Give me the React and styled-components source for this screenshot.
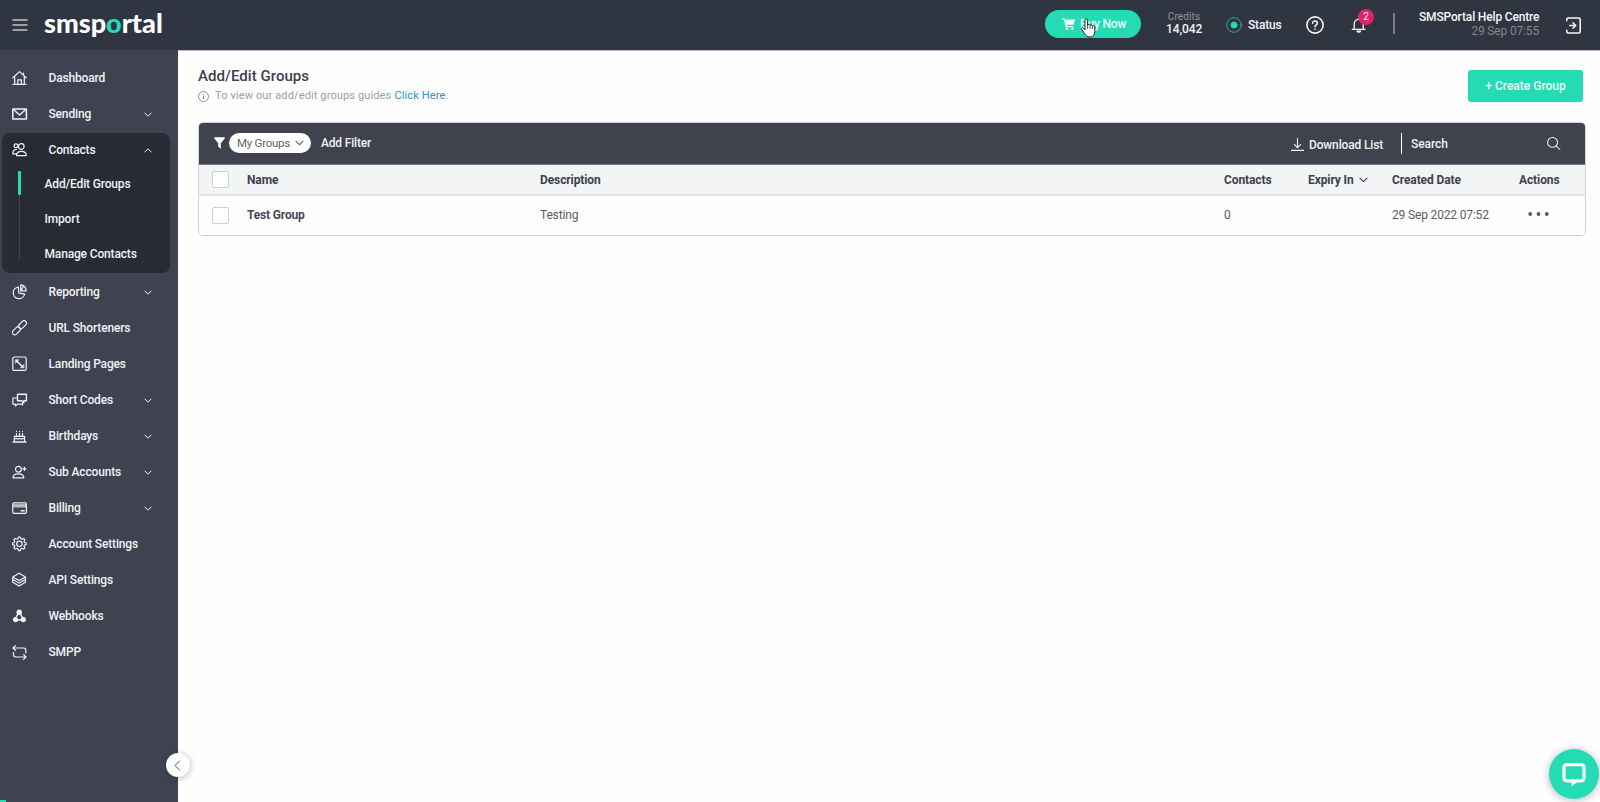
import React from "react"
import styled, { createGlobalStyle } from "styled-components"

const colors = {
  header: "#2f3541",
  side: "#3f4250",
  active: "#272b34",
  toolbar: "#40424e",
  teal: "#25dbb3",
  pink: "#dd2468",
  border: "#c9d3dc",
  text: "#3d414d",
}

const GlobalStyle = createGlobalStyle`
  * {
    box-sizing: border-box;
  }
  body {
    margin: 0;
    background: #fefefe;
    font-family: Roboto, "Liberation Sans", sans-serif;
    font-size: 12px;
    letter-spacing: -0.16px;
    color: ${colors.text};
    overflow: hidden;
  }
  svg {
    display: block;
    flex: none;
  }
`

const Page = styled.div`
  display: flex;
  flex-direction: column;
  height: 802px;
`

const Header = styled.header`
  display: flex;
  align-items: center;
  flex: none;
  height: 50px;
  padding: 0 18px 0 12px;
  background: ${colors.header};
  color: #f4f5f7;
`
const Logo = styled.div`
  margin: -5px auto 0 16px;
  font-family: Lato, sans-serif;
  font-size: 27px;
  font-weight: 900;
  line-height: 36px;
  letter-spacing: 0;
  color: #fff;

  span {
    color: ${colors.teal};
  }
`
const BuyNow = styled.div`
  position: relative;
  display: flex;
  align-items: center;
  gap: 5px;
  width: 96px;
  height: 28px;
  margin: -3px 25px 0 0;
  padding-left: 17px;
  border-radius: 14px;
  background: ${colors.teal};
  font-weight: 500;
  color: #effffb;
`
const Pointer = styled.svg`
  position: absolute;
  left: 35px;
  top: 8px;
`
const Credits = styled.div`
  width: 36px;
  margin: -4px 24px 0 0;
  text-align: center;
  line-height: 13px;
  font-weight: 500;
  letter-spacing: -0.1px;
  white-space: nowrap;

  small {
    display: block;
    font-size: 10px;
    font-weight: 400;
    letter-spacing: 0.1px;
    color: #94959d;
  }
`
const Status = styled.div`
  display: flex;
  align-items: center;
  gap: 6px;
  width: 80px;
  margin-top: -1px;
  font-weight: 500;
`
const Bell = styled.div`
  position: relative;
  margin-left: 27px;
`
const Badge = styled.span`
  position: absolute;
  left: 7px;
  top: -8px;
  width: 16px;
  height: 16px;
  border-radius: 50%;
  background: ${colors.pink};
  font-size: 10px;
  line-height: 16px;
  text-align: center;
`
const Separator = styled.div`
  width: ${(p) => p.$width || 1}px;
  height: 21px;
  margin: ${(p) => p.$margin};
  background: ${(p) => p.$color || "#fff"};
`
const Account = styled.div`
  width: 120px;
  margin: -2px 26px 0 0;
  text-align: right;
  line-height: 14px;
  font-weight: 500;
  white-space: nowrap;

  small {
    display: block;
    font-size: 12px;
    font-weight: 400;
    color: #85868f;
  }
`

const Body = styled.div`
  display: flex;
  flex: 1;
  min-height: 0;
`
const Sidebar = styled.nav`
  position: relative;
  flex: none;
  width: 178px;
  padding-top: 10px;
  background: ${colors.side};
  color: #f1f2f5;
  font-weight: 500;
`
const NavItem = styled.div`
  display: flex;
  align-items: center;
  height: ${(p) => (p.$open ? 34 : 36)}px;
  padding: ${(p) => (p.$open ? "0 18px 0 10px" : "0 26px 0 12px")};

  span {
    flex: 1;
    margin-left: 20.5px;
  }
`
const NavGroup = styled.div`
  width: 168px;
  height: 140px;
  margin: 1px 0 1px 2px;
  border-radius: 8px;
  background: ${colors.active};
`
const SubList = styled.div`
  margin-left: 16px;
  display: flex;
`
const Track = styled.div`
  width: 3px;
  height: 89px;
  margin-top: 4px;
  background: linear-gradient(
    90deg,
    transparent 1px,
    #41434f 1px,
    #41434f 2px,
    transparent 2px
  );

  &::before {
    content: "";
    display: block;
    height: 24px;
    border-radius: 1px;
    background: ${colors.teal};
  }
`
const SubItem = styled.div`
  height: 35px;
  padding-left: 23.5px;
  line-height: 34px;
`
const Collapse = styled.div`
  position: absolute;
  right: -12px;
  bottom: 25px;
  display: flex;
  align-items: center;
  justify-content: center;
  width: 24px;
  height: 24px;
  padding-right: 2px;
  border-radius: 50%;
  background: #fff;
  box-shadow: 0 1px 6px rgba(30, 50, 60, 0.35);
`
const Progress = styled.div`
  position: absolute;
  left: 0;
  bottom: 0;
  width: 6px;
  height: 2px;
  background: ${colors.teal};
`

const Main = styled.main`
  flex: 1;
  padding: 16px 14px 0 20px;
  border-top: 1px solid #b9bcc2;
`
const TitleBar = styled.div`
  display: flex;
  justify-content: space-between;
  height: 55px;
`
const Title = styled.h1`
  margin: 0;
  font-size: 15px;
  font-weight: 500;
  line-height: 19px;
  letter-spacing: 0.05px;
`
const Hint = styled.p`
  display: flex;
  align-items: center;
  margin: 3px 0 0;
  font-size: 11px;
  line-height: 14px;
  letter-spacing: 0.13px;
  color: #8ea2b1;

  svg {
    margin-right: 6px;
  }
  a {
    margin-left: 3px;
    color: #2f8fd0;
  }
`
const CreateButton = styled.div`
  width: 115px;
  height: 32px;
  margin: 3px 3px 0 0;
  border-radius: 3px;
  background: ${colors.teal};
  line-height: 32px;
  text-align: center;
  letter-spacing: 0;
  font-weight: 500;
  color: #f0fffb;
`

const Table = styled.section`
  border: 1px solid ${colors.border};
  border-radius: 5px;
  overflow: hidden;
  height: 114px;
`
const Toolbar = styled.div`
  display: flex;
  align-items: center;
  height: 43px;
  margin: -1px -1px 0;
  padding: 0 25px 0 16px;
  background: ${colors.toolbar};
  border-bottom: 1px solid #6f7481;
  font-weight: 500;
  color: #f1f1f3;
`
const FilterGroup = styled.div`
  display: flex;
  align-items: center;
`
const Filter = styled.div`
  display: flex;
  align-items: center;
  gap: 5px;
  height: 20px;
  margin: 0 10px 0 4px;
  padding: 0 7px 0 8px;
  border-radius: 10px;
  background: #fff;
  font-size: 11.5px;
  font-weight: 400;
  letter-spacing: -0.26px;
  color: #62646e;
`
const Download = styled.div`
  display: flex;
  align-items: center;
  gap: 5px;
  margin: 3px 18px 0 auto;
`
const Search = styled.div`
  display: flex;
  align-items: center;
  justify-content: space-between;
  width: 150px;
  margin-top: 1px;
  letter-spacing: -0.05px;
`
const Row = styled.div`
  display: grid;
  grid-template-columns: 35px 293px 1fr 84px 84px 127px 54px;
  align-items: center;
  padding: 0 12px 0 13px;
  height: ${(p) => (p.$head ? 31 : 39)}px;
  background: ${(p) => (p.$head ? "#f2f4f6" : "#fefefe")};
  border-bottom: ${(p) => (p.$head ? "2px solid #e0e5e8" : "none")};
  font-weight: ${(p) => (p.$head ? 700 : 400)};
  color: ${(p) => (p.$head ? colors.text : "#5a5c66")};
  letter-spacing: ${(p) => (p.$head ? -0.1 : -0.16)}px;

  strong {
    color: #464954;
    letter-spacing: -0.15px;
  }
`
const Cell = styled.div`
  display: flex;
  align-items: center;
  gap: 5px;
  padding-left: ${(p) => p.$indent || 0}px;
  padding-bottom: ${(p) => p.$lift || 0}px;
`
const Checkbox = styled.div`
  width: 17px;
  height: 17px;
  border: 1px solid #c4d3de;
  border-radius: 2px;
  background: #fff;
`
const Chat = styled.div`
  position: fixed;
  right: 1px;
  bottom: 3px;
  display: flex;
  align-items: center;
  justify-content: center;
  width: 50px;
  height: 50px;
  border-radius: 50%;
  background: ${colors.teal};
  box-shadow: 0 1px 9px rgba(40, 45, 80, 0.35);
`

const Svg = ({ size = 16, width = 1.2, children }) => (
  <svg
    width={size}
    height={size}
    viewBox="0 0 16 16"
    fill="none"
    stroke="currentColor"
    strokeWidth={width}
    strokeLinecap="round"
    strokeLinejoin="round"
  >
    {children}
  </svg>
)

const Chevron = ({ dir = "down", w = 8 }) => (
  <svg width={w} height={w / 2 + 1} viewBox="0 0 8 5" fill="none" stroke="currentColor">
    <path d={dir === "down" ? "M.5.7 4 4.2 7.5.7" : "M.5 4.3 4 .8l3.5 3.5"} />
  </svg>
)

const icons = {
  home: (
    <>
      <path d="M.8 7.8 7.5 1.6l6.7 6.2M2.7 6.8v7.5h9.6V6.8M1 14.4h13" />
      <path d="M5.8 14V9.8h3.6V14M11.5 3v2" />
    </>
  ),
  mail: (
    <>
      <path d="M.8 3h13.6v10H.8z" strokeWidth="1.5" />
      <path d="m2 4 5.6 5L13.2 4" strokeWidth="1.4" />
    </>
  ),
  contacts: (
    <>
      <circle cx="4" cy="3.8" r="1.9" />
      <circle cx="9.3" cy="4.5" r="2.8" />
      <path d="M4.5 13.6h9.7c0-3-1.8-4.3-4.9-4.3s-4.8 1.3-4.8 4.3ZM4.3 11.8H.8c0-2.8 1-4.2 3.6-4.4" />
    </>
  ),
  pie: (
    <>
      <path d="M6.4 3.1a5.8 5.8 0 1 0 6.3 7L6.7 8.9z" />
      <path d="M8.7.9v6h5.5A5.7 5.7 0 0 0 8.7.9ZM8.7 6.9l2.5-4.2" />
    </>
  ),
  link: (
    <>
      <rect x="-1.6" y="-2.4" width="9.2" height="4.8" rx="2.4" transform="translate(8.4 6.8) rotate(-45)" />
      <rect x="-7.6" y="-2.4" width="9.2" height="4.8" rx="2.4" transform="translate(6.5 8.7) rotate(-45)" />
    </>
  ),
  landing: (
    <>
      <rect x=".8" y="1" width="13.4" height="13.4" rx="1.5" />
      <path d="m4.5 4.7 6 6" strokeWidth="1.5" />
      <path d="M3.6 3.8h3.2L3.6 7zM11.6 11.8H8.4l3.2-3.2z" fill="currentColor" strokeWidth=".6" />
    </>
  ),
  chat: (
    <>
      <path d="M5.5 2.2h8.9v6.6h-2.6v2L9.6 8.8H5.5z" strokeWidth="1.4" />
      <path d="M5.3 6H.9v6.2h2.5V14l2-1.8h4.3l.8.9v-2.3" />
    </>
  ),
  cake: (
    <>
      <path d="M2.4 13.4V8.4h10.2v5M2.4 11.2l1.7-.9 1.7.9 1.7-.9 1.7.9 1.7-.9 1.7.9" />
      <path d="M1.1 14h12.8" strokeWidth="1.6" />
      <path d="M4.5 5.6V8M7.5 5.6V8M10.5 5.6V8M4.5 3.3v.3M7.5 3.3v.3M10.5 3.3v.3" strokeWidth="1.2" />
    </>
  ),
  userPlus: (
    <>
      <circle cx="6.4" cy="5.2" r="2.9" />
      <path d="M1 13.8c0-2.8 1.8-4 5.4-4s5.4 1.2 5.4 4zM12.4 3.2v3.2M10.8 4.8H14" />
    </>
  ),
  card: (
    <>
      <rect x=".8" y="2.9" width="13.6" height="10.4" rx="1.2" />
      <path d="M1.2 5.8h12.8" strokeWidth="3.4" strokeLinecap="butt" opacity=".7" />
      <path d="M9.2 10.7h3" strokeWidth="1.4" />
    </>
  ),
  gear: (
    <>
      <path d="m6.4 1-.5 1.8-1.2.5-1.6-.9-1.3 1.3.9 1.6-.5 1.2L.6 7v1.6l1.7.5.5 1.2-.9 1.6 1.3 1.3 1.6-.9 1.2.5.5 1.8h1.8l.5-1.8 1.2-.5 1.6.9 1.3-1.3-.9-1.6.5-1.2 1.7-.5V7l-1.7-.5-.5-1.2.9-1.6-1.3-1.3-1.6.9-1.2-.5L8.2 1z" />
      <circle cx="7.4" cy="7.8" r="2.7" />
    </>
  ),
  layers: (
    <>
      <path d="M7.1 1.2 13.5 5 7.1 8.5.7 5zM.8 7.6l6.3 3.5 6.3-3.5M.8 10.2l6.3 3.9 6.3-3.9M.7 5v5M13.5 5v5" />
    </>
  ),
  webhook: (
    <>
      <path d="M7 4.4 4.4 8.6M7.4 4l3.4 6.4M4 12h6.8" strokeWidth="1.5" />
      <circle cx="7.2" cy="4.2" r="2.1" fill="currentColor" />
      <circle cx="3.5" cy="11.6" r="2" fill="currentColor" />
      <circle cx="11.3" cy="11.6" r="2" fill="currentColor" />
    </>
  ),
  loop: (
    <>
      <path d="M1 4h10.6c1.6 0 2.2.8 2.2 2.4v2.4M3.4 1.6 1 4l2.4 2.4M14 13H3.8c-1.6 0-2.3-.8-2.3-2.4V8.4M11.6 10.6 14 13l-2.4 2.4" />
    </>
  ),
}

const Icon = ({ name }) => <Svg>{icons[name]}</Svg>

const items = [
  { label: "Reporting", icon: "pie", more: true },
  { label: "URL Shorteners", icon: "link" },
  { label: "Landing Pages", icon: "landing" },
  { label: "Short Codes", icon: "chat", more: true },
  { label: "Birthdays", icon: "cake", more: true },
  { label: "Sub Accounts", icon: "userPlus", more: true },
  { label: "Billing", icon: "card", more: true },
  { label: "Account Settings", icon: "gear" },
  { label: "API Settings", icon: "layers" },
  { label: "Webhooks", icon: "webhook" },
  { label: "SMPP", icon: "loop" },
]

const NavLink = ({ label, icon, more }) => (
  <NavItem>
    <Icon name={icon} />
    <span>{label}</span>
    {more && <Chevron />}
  </NavItem>
)

const TopBar = () => (
  <Header>
    <svg width="16" height="12" viewBox="0 0 16 12" stroke="#c3c5ca" strokeWidth="1.3">
      <path d="M.5 1h15M.5 6h15M.5 11h15" />
    </svg>
    <Logo>
      smsp<span>o</span>rtal
    </Logo>
    <BuyNow>
      <svg width="13" height="12" viewBox="0 0 13 12" fill="currentColor">
        <path d="M0 .3h2.5l.4 1.2H13l-1.4 5.3H4.5l.3 1.3h6.4v1.1H3.8L1.8 1.4H0z" />
        <circle cx="4.7" cy="10.7" r="1.2" />
        <circle cx="10.4" cy="10.7" r="1.2" />
      </svg>
      <span>Buy Now</span>
      <Pointer width="17" height="20" viewBox="0 0 17 20" fill="#fff" stroke="#23262e" strokeWidth="1">
        <path d="M5 12V2.2C5 .3 7.6.3 7.6 2.2v5c.3-1 2.2-.9 2.4.2.5-.8 2.3-.5 2.4.6.8-.7 2.4-.2 2.4 1.2v4.1c0 3-1.4 5.7-4.7 5.7-2.8 0-4.2-1.1-5.5-3.3L1.8 11.4c-.9-1.5 1-2.6 2-.9z" />
        <path d="M7.6 7v4M10 7.5V11M12.4 8.2V11" strokeWidth=".8" />
      </Pointer>
    </BuyNow>
    <Credits>
      <small>Credits</small>
      14,042
    </Credits>
    <Status>
      <Svg width={1}>
        <g stroke={colors.teal}>
          <circle cx="8" cy="8" r="7.3" opacity=".75" />
          <circle cx="8" cy="8" r="3" fill={colors.teal} />
        </g>
      </Svg>
      Status
    </Status>
    <Svg size={18} width={1.4}>
      <circle cx="8" cy="8" r="7.2" />
      <path d="M5.9 6.4c0-2.7 4.2-2.6 4.2 0C10.1 7.8 8 7.9 8 9.5M8 11.6v.2" />
    </Svg>
    <Bell>
      <Svg width={1.3}>
        <path d="M1.2 12.3h13M3.2 12V6.8c0-6 9-6 9 0V12M7.7 1.3v1" />
        <path d="M6 14.2c.5 1.3 3 1.3 3.5 0z" fill="currentColor" />
      </Svg>
      <Badge>2</Badge>
    </Bell>
    <Separator $width={2} $margin="-4px 24px 0 26px" $color="#7b7e88" />
    <Account>
      SMSPortal Help Centre
      <small>29 Sep 07:55</small>
    </Account>
    <Svg size={17} width={1.5}>
      <path d="M1.7 3.6V2.2c0-.8.4-1.2 1.2-1.2h10.2c.8 0 1.2.4 1.2 1.2v11.6c0 .8-.4 1.2-1.2 1.2H2.9c-.8 0-1.2-.4-1.2-1.2v-1.4M4.5 8h5.3M7.5 5.4 10.1 8l-2.6 2.6" />
    </Svg>
  </Header>
)

const SideNav = () => (
  <Sidebar>
    <NavLink label="Dashboard" icon="home" />
    <NavLink label="Sending" icon="mail" more />
    <NavGroup>
      <NavItem $open>
        <Icon name="contacts" />
        <span>Contacts</span>
        <Chevron dir="up" />
      </NavItem>
      <SubList>
        <Track />
        <div>
          <SubItem>Add/Edit Groups</SubItem>
          <SubItem>Import</SubItem>
          <SubItem>Manage Contacts</SubItem>
        </div>
      </SubList>
    </NavGroup>
    {items.map((item) => (
      <NavLink key={item.label} {...item} />
    ))}
    <Collapse>
      <svg width="7" height="11" viewBox="0 0 7 11" fill="none" stroke="#4a4d57">
        <path d="M5.8.7 1 5.5l4.8 4.8" />
      </svg>
    </Collapse>
    <Progress />
  </Sidebar>
)

const App = () => (
  <>
    <GlobalStyle />
    <Page>
      <TopBar />
      <Body>
        <SideNav />
        <Main>
          <TitleBar>
            <div>
              <Title>Add/Edit Groups</Title>
              <Hint>
                <svg width="11" height="11" viewBox="0 0 11 11" fill="none" stroke="#777a84" strokeWidth=".8">
                  <circle cx="5.5" cy="5.5" r="5" />
                  <path d="M5.5 4.7v3.5M5.5 2.6v1" strokeWidth="1" />
                </svg>
                To view our add/edit groups guides <a>Click Here</a>.
              </Hint>
            </div>
            <CreateButton>+ Create Group</CreateButton>
          </TitleBar>
          <Table>
            <Toolbar>
              <FilterGroup>
                <svg width="11" height="12" viewBox="0 0 11 12" fill="#fff">
                  <path d="M.3.3h10.4v1.2L6.8 6.3v5.4l-2.6-2V6.3L.3 1.5z" />
                </svg>
                <Filter>
                  My Groups <Chevron w={9} />
                </Filter>
                Add Filter
              </FilterGroup>
              <Download>
                <svg width="13" height="13" viewBox="0 0 13 13" fill="none" stroke="currentColor" strokeWidth="1.1">
                  <path d="M6.5 0v9.5M3 6.2l3.5 3.5L10 6.2M0 12.4h13" />
                </svg>
                Download List
              </Download>
              <Separator $margin="0 9px 0 0" />
              <Search>
                Search
                <Svg size={15} width={1.1}>
                  <circle cx="7" cy="6.8" r="5.3" />
                  <path d="m11 10.8 3.8 3.6" />
                </Svg>
              </Search>
            </Toolbar>
            <Row $head>
              <Checkbox />
              <Cell>Name</Cell>
              <Cell>Description</Cell>
              <Cell>Contacts</Cell>
              <Cell>
                Expiry In <Chevron w={9} />
              </Cell>
              <Cell>Created Date</Cell>
              <Cell>Actions</Cell>
            </Row>
            <Row>
              <Checkbox />
              <Cell $lift={1}>
                <strong>Test Group</strong>
              </Cell>
              <Cell $lift={1}>Testing</Cell>
              <Cell $lift={1}>0</Cell>
              <Cell />
              <Cell $lift={1}>29 Sep 2022 07:52</Cell>
              <Cell $indent={9} $lift={2}>
                <svg width="21" height="5" viewBox="0 0 21 5" fill="#555862">
                  <circle cx="2.2" cy="2" r="1.9" />
                  <circle cx="10.5" cy="2" r="1.9" />
                  <circle cx="18.8" cy="2" r="1.9" />
                </svg>
              </Cell>
            </Row>
          </Table>
        </Main>
      </Body>
      <Chat>
        <svg width="24" height="24" viewBox="0 0 24 24" fill="none" stroke="#fff" strokeWidth="3.2">
          <path d="M5 2.6h14c2 0 3 1 3 3v10.2c0 1.9-1 2.8-3 3h-4.5l-3.4 2.4V18.8H5c-2 0-3-1.1-3-3V5.6c0-2 1-3 3-3z" />
        </svg>
      </Chat>
    </Page>
  </>
)

export default App
